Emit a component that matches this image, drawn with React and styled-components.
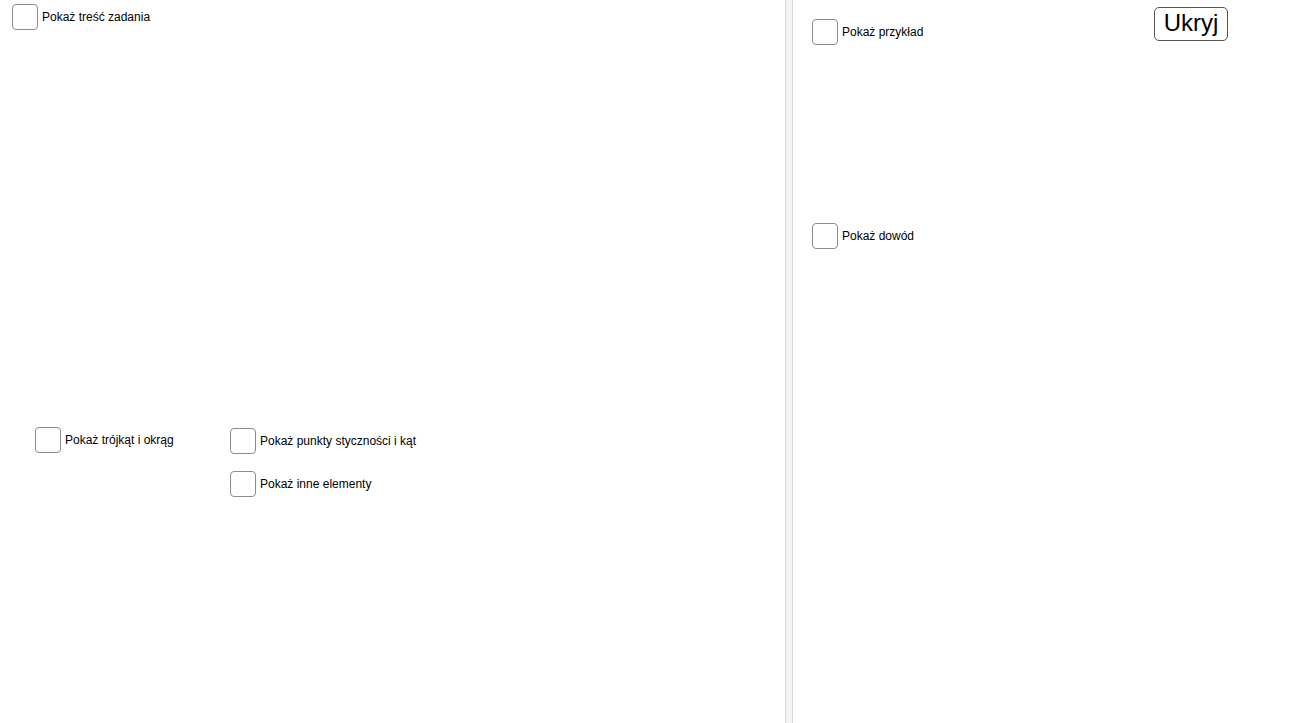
import React from 'react';
import styled, {createGlobalStyle} from 'styled-components';

const Global = createGlobalStyle`
  html, body {
    margin: 0;
    padding: 0;
    background: #ffffff;
    overflow: hidden;
  }
  body {
    font-family: "Liberation Sans", Arial, sans-serif;
  }
`;

const Applet = styled.div`
  display: flex;
  width: 1296px;
  height: 723px;
  background: #ffffff;
`;

const Canvas = styled.div`
  position: relative;
  flex: ${props => props.grow ? '1 1 auto' : `0 0 ${props.width}px`};
  height: 100%;
`;

const Divider = styled.div`
  flex: 0 0 8px;
  height: 100%;
  box-sizing: border-box;
  background: #f3f3f3;
  border-left: 1px solid #d6d6d6;
  border-right: 1px solid #d6d6d6;
`;

// checkbox placed on the canvas at its object coordinates
const Check = styled.label`
  position: absolute;
  display: flex;
  align-items: center;
  gap: 4px;
  cursor: pointer;
  font-size: 12px;
  color: #000000;
  white-space: nowrap;
`;

const Box = styled.span`
  display: block;
  width: 26px;
  height: 26px;
  box-sizing: border-box;
  border: 1.5px solid #8c8c8c;
  border-radius: 4px;
  background: #ffffff;
`;

const Button = styled.button`
  position: absolute;
  box-sizing: border-box;
  width: 74px;
  height: 34px;
  padding: 0 0 2px;
  border: 1px solid #555555;
  border-radius: 5px;
  background: #ffffff;
  font-family: "Liberation Sans", Arial, sans-serif;
  font-size: 24px;
  color: #000000;
  cursor: pointer;
`;

const leftChecks = [
  {label: 'Pokaż treść zadania', x: 12, y: 4},
  {label: 'Pokaż trójkąt i okrąg', x: 35, y: 427},
  {label: 'Pokaż punkty styczności i kąt', x: 230, y: 428},
  {label: 'Pokaż inne elementy', x: 230, y: 471},
];

const rightChecks = [
  {label: 'Pokaż przykład', x: 19, y: 19},
  {label: 'Pokaż dowód', x: 19, y: 223},
];

const CheckItem = ({label, x, y}) => (
  <Check style={{left: x, top: y}}>
    <Box />
    <span>{label}</span>
  </Check>
);

export default function App() {
  return (
    <Applet>
      <Global />
      <Canvas width={785}>
        {leftChecks.map(c => <CheckItem key={c.label} {...c} />)}
      </Canvas>
      <Divider />
      <Canvas grow>
        {rightChecks.map(c => <CheckItem key={c.label} {...c} />)}
        <Button style={{left: 361, top: 7}}>Ukryj</Button>
      </Canvas>
    </Applet>
  );
}
